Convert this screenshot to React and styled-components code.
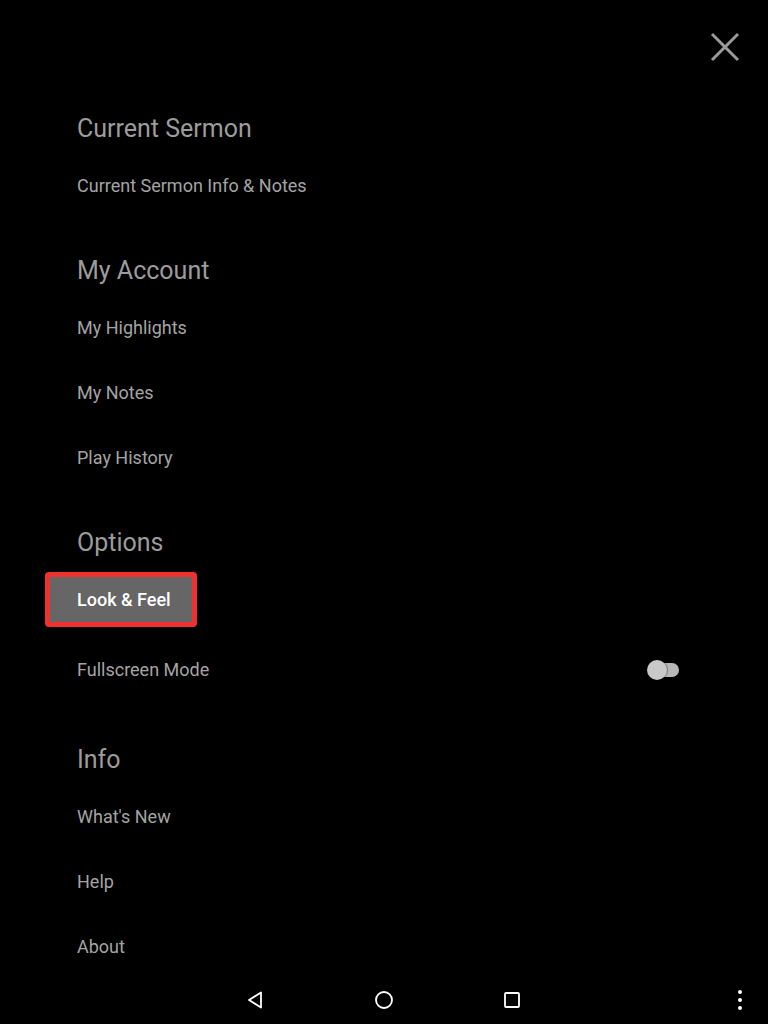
import React from 'react'
import styled, { createGlobalStyle, css } from 'styled-components';

const GlobalStyle = createGlobalStyle`
    html, body {
        margin: 0;
        padding: 0;
        background: #000000;
    }
    * {
        box-sizing: border-box;
    }
`;

const sections = [
    { title: 'Current Sermon', items: [{ label: 'Current Sermon Info & Notes' }] },
    {
        title: 'My Account',
        items: [{ label: 'My Highlights' }, { label: 'My Notes' }, { label: 'Play History' }],
    },
    {
        title: 'Options',
        items: [{ label: 'Look & Feel', selected: true }, { label: 'Fullscreen Mode', toggle: true }],
    },
    { title: 'Info', items: [{ label: "What's New" }, { label: 'Help' }, { label: 'About' }] },
];

const App = () => {
    return (
        <Page>
            <GlobalStyle />
            <TopBar>
                <CloseButton aria-label="Close">
                    <svg width="30" height="30" viewBox="0 0 30 30">
                        <path d="M2 2 L28 28 M28 2 L2 28" stroke="#9a9a9a" strokeWidth="3" fill="none" />
                    </svg>
                </CloseButton>
            </TopBar>
            <Menu>
                {sections.map(section => (
                    <Section key={section.title}>
                        <Heading>{section.title}</Heading>
                        {section.items.map(item => (
                            <Item key={item.label} $tall={item.toggle}>
                                <Label $selected={item.selected}>{item.label}</Label>
                                {item.toggle && (
                                    <Switch>
                                        <Track />
                                        <Thumb />
                                    </Switch>
                                )}
                            </Item>
                        ))}
                    </Section>
                ))}
            </Menu>
            <NavBar>
                <NavGroup>
                    <NavButton aria-label="Back">
                        <svg width="20" height="20" viewBox="0 0 20 20">
                            <path d="M15 2.5 L15 17.5 L3 10 Z" stroke="#fff" strokeWidth="1.8" fill="none" strokeLinejoin="round" />
                        </svg>
                    </NavButton>
                    <NavButton aria-label="Home">
                        <svg width="20" height="20" viewBox="0 0 20 20">
                            <circle cx="10" cy="10" r="8" stroke="#fff" strokeWidth="1.8" fill="none" />
                        </svg>
                    </NavButton>
                    <NavButton aria-label="Recents">
                        <svg width="20" height="20" viewBox="0 0 20 20">
                            <rect x="3" y="3" width="14" height="14" rx="1" stroke="#fff" strokeWidth="1.8" fill="none" />
                        </svg>
                    </NavButton>
                </NavGroup>
                <MoreButton aria-label="More">
                    <svg width="8" height="22" viewBox="0 0 8 22">
                        <circle cx="4" cy="3" r="2" fill="#fff" />
                        <circle cx="4" cy="11" r="2" fill="#fff" />
                        <circle cx="4" cy="19" r="2" fill="#fff" />
                    </svg>
                </MoreButton>
            </NavBar>
        </Page>
    );
};

export default App;

// Styles
const Page = styled.div`
    display: flex;
    flex-direction: column;
    width: 768px;
    height: 1024px;
    background: #000000;
    font-family: Roboto, "Noto Sans", sans-serif;
    overflow: hidden;
`;

const TopBar = styled.div`
    flex-shrink: 0;
    display: flex;
    justify-content: flex-end;
    padding: 32px 28px 0 0;
    height: 94px;
`;

const CloseButton = styled.button`
    width: 30px;
    height: 30px;
    padding: 0;
    border: none;
    background: none;
    display: flex;
`;

const Menu = styled.div`
    flex: 1;
    min-height: 0;
    overflow: hidden;
    display: flex;
    flex-direction: column;
    gap: 28px;
    padding: 10px 89px 0 77px;
`;

const Section = styled.div`
    flex-shrink: 0;
    display: flex;
    flex-direction: column;
`;

const Heading = styled.div`
    flex-shrink: 0;
    height: 49px;
    display: flex;
    align-items: center;
    color: #9c9c9c;
    font-size: 25px;
    font-weight: 400;
`;

const Item = styled.div`
    flex-shrink: 0;
    height: 65px;
    display: flex;
    align-items: center;
    justify-content: space-between;

    ${props => props.$tall && css`
        height: 75px;
    `}
`;

const Label = styled.span`
    color: #a4a4a4;
    font-size: 18px;

    ${props => props.$selected && css`
        display: flex;
        align-items: center;
        width: 152px;
        height: 55px;
        margin-left: -32px;
        padding-left: 27px;
        border: 5px solid #f03131;
        border-radius: 4px;
        background: #666666;
        color: #ffffff;
        font-weight: 500;
    `}
`;

const Switch = styled.div`
    position: relative;
    width: 30px;
    height: 20px;
    display: flex;
    align-items: center;
`;

const Track = styled.div`
    width: 100%;
    height: 14px;
    border-radius: 7px;
    background: #b8b8b8;
`;

const Thumb = styled.div`
    position: absolute;
    left: -2px;
    top: 0;
    width: 20px;
    height: 20px;
    border-radius: 50%;
    background: #c9c9c9;
    box-shadow: 1px 0 1px rgba(0, 0, 0, 0.35);
`;

const NavBar = styled.div`
    flex-shrink: 0;
    height: 48px;
    display: grid;
    grid-template-columns: 1fr auto 1fr;
    align-items: center;
`;

const NavGroup = styled.div`
    grid-column: 2;
    display: flex;
`;

const NavButton = styled.button`
    width: 128px;
    height: 48px;
    padding: 0;
    border: none;
    background: none;
    display: flex;
    align-items: center;
    justify-content: center;
`;

const MoreButton = styled.button`
    grid-column: 3;
    justify-self: end;
    margin-right: 8px;
    width: 40px;
    height: 48px;
    padding: 0;
    border: none;
    background: none;
    display: flex;
    align-items: center;
    justify-content: center;
`;
